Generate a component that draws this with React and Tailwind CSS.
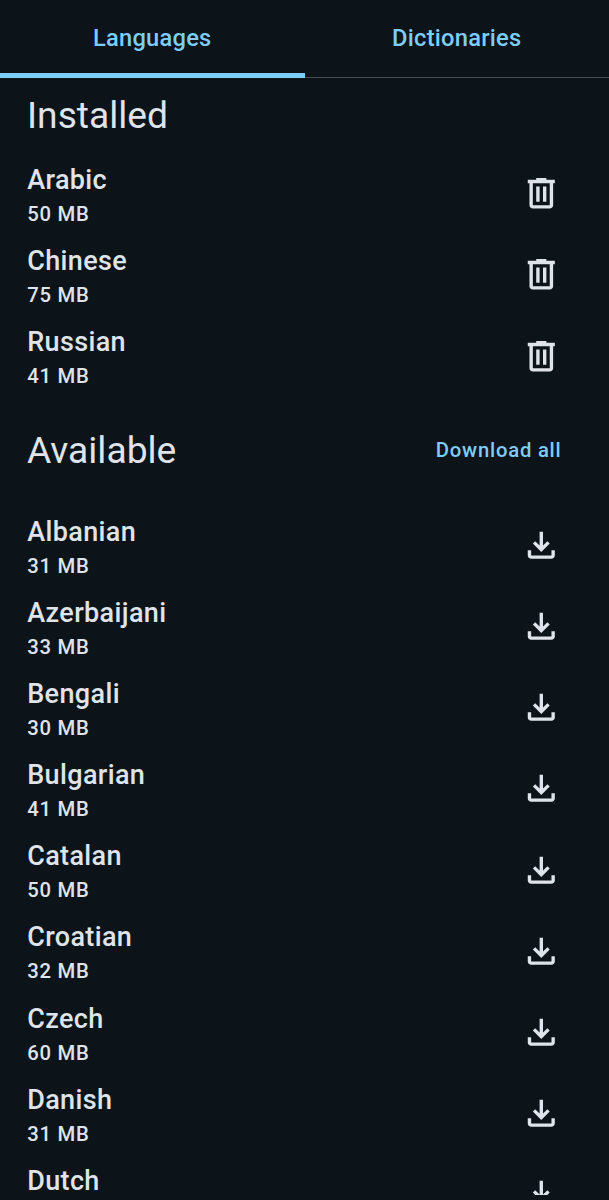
const installed = [
  { name: 'Arabic', size: '50 MB' },
  { name: 'Chinese', size: '75 MB' },
  { name: 'Russian', size: '41 MB' },
];

const available = [
  { name: 'Albanian', size: '31 MB' },
  { name: 'Azerbaijani', size: '33 MB' },
  { name: 'Bengali', size: '30 MB' },
  { name: 'Bulgarian', size: '41 MB' },
  { name: 'Catalan', size: '50 MB' },
  { name: 'Croatian', size: '32 MB' },
  { name: 'Czech', size: '60 MB' },
  { name: 'Danish', size: '31 MB' },
  { name: 'Dutch' },
];

const DeleteIcon = () => (
  <svg viewBox="0 0 24 24" fill="currentColor" className="size-[40.6px]">
    <path d="M7 21q-.825 0-1.413-.588T5 19V6H4V4h5V3h6v1h5v2h-1v13q0 .825-.588 1.413T17 21zM17 6H7v13h10zM9 17h2V8H9zm4 0h2V8h-2z" />
  </svg>
);

const DownloadIcon = () => (
  <svg viewBox="0 0 24 24" fill="currentColor" className="size-[40.6px]">
    <path d="m12 16-5-5 1.4-1.45 2.6 2.6V4h2v8.15l2.6-2.6L17 11zm-6 4q-.825 0-1.412-.588T4 18v-3h2v3h12v-3h2v3q0 .825-.588 1.413T18 20z" />
  </svg>
);

/** One language with its size and a single action button */
const LanguageRow = ({ name, size, action, children }) => (
  <li className="flex h-[81.15px] shrink-0 items-center justify-between pl-[27.2px] pr-[47.5px]">
    <div className="h-[67.2px]">
      <div className="text-[27px] font-medium leading-[41px] tracking-[0.36px]">{name}</div>
      {size && <div className="text-[20.3px] font-medium leading-[26px] tracking-[0.75px]">{size}</div>}
    </div>
    <button aria-label={`${action} ${name}`}>{children}</button>
  </li>
);

const App = () => (
  <div className="h-[1200px] overflow-hidden bg-[#0c1319] pb-[5px] font-['Roboto',sans-serif] text-[#dfe3ea]">
    <div className="flex h-full flex-col overflow-hidden">
      {/* Tabs */}
      <nav className="flex h-[78px] shrink-0 text-[23.7px] font-medium tracking-[0.24px] text-[#7dcdf9]">
        <button className="w-[304.5px] border-b-[5px] border-[#7dcdf9] pt-[5px]">Languages</button>
        <button className="flex-1 border-b border-[#454b51] pt-px">Dictionaries</button>
      </nav>

      {/* Installed */}
      <header className="flex h-[75px] shrink-0 items-center px-[27px]">
        <h2 className="text-[37.2px] leading-[47px]">Installed</h2>
      </header>
      <ul className="shrink-0">
        {installed.map((lang) => (
          <LanguageRow key={lang.name} {...lang} action="Delete">
            <DeleteIcon />
          </LanguageRow>
        ))}
      </ul>

      {/* Available */}
      <header className="flex h-[108.3px] shrink-0 items-center justify-between pl-[27px] pr-[47.5px]">
        <h2 className="text-[37.2px] leading-[47px]">Available</h2>
        <button className="text-[20.3px] font-medium tracking-[0.77px] text-[#7dcdf9]">Download all</button>
      </header>
      <ul className="shrink-0">
        {available.map((lang) => (
          <LanguageRow key={lang.name} {...lang} action="Download">
            <DownloadIcon />
          </LanguageRow>
        ))}
      </ul>
    </div>
  </div>
);

export default App;
